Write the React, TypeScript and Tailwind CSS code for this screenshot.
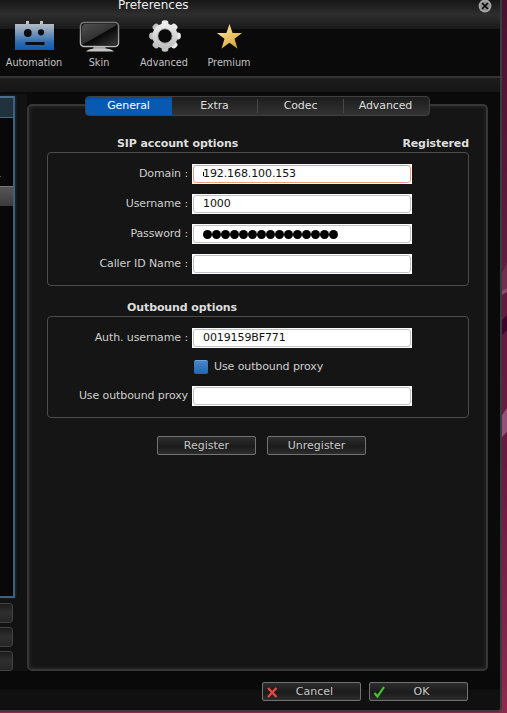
import type { ReactNode } from 'react';

function RobotIcon() {
  return (
    <svg width="42" height="32" viewBox="0 0 42 32">
      <defs>
        <linearGradient id="robot" x1="0" y1="0" x2="0" y2="1">
          <stop offset="0" stopColor="#c4c6c9" />
          <stop offset="0.3" stopColor="#91a5bd" />
          <stop offset="0.75" stopColor="#2b6bb0" />
          <stop offset="1" stopColor="#0a5ab0" />
        </linearGradient>
      </defs>
      <path d="M1 4H12V1H15V4H26V1H29V4H40V30H1Z" fill="url(#robot)" />
      <circle cx="13.800" cy="13" r="3.900" fill="#0b0d10" />
      <circle cx="27" cy="12.300" r="3.100" fill="#0b0d10" />
      <rect x="11.500" y="22" width="19" height="3" fill="#0b0d10" />
    </svg>
  );
}

function MonitorIcon() {
  return (
    <svg width="42" height="32" viewBox="0 0 42 32">
      <defs>
        <linearGradient id="screen" x1="0" y1="0" x2="0.700" y2="1">
          <stop offset="0" stopColor="#505050" />
          <stop offset="1" stopColor="#1c1c1c" />
        </linearGradient>
        <linearGradient id="glow" x1="0" y1="0" x2="1" y2="1">
          <stop offset="0.5" stopColor="#050505" />
          <stop offset="1" stopColor="#383838" />
        </linearGradient>
        <linearGradient id="frame" x1="0" y1="0" x2="0" y2="1">
          <stop offset="0" stopColor="#777" />
          <stop offset="1" stopColor="#bbb" />
        </linearGradient>
      </defs>
      <path d="M15 26H26L27 29.500H14Z" fill="#999" />
      <path d="M7 31.500Q9 29 15 28.500H27Q33 29 35 31.500Z" fill="#c4c4c4" />
      <rect x="1.500" y="2.500" width="38" height="24" rx="3.500" fill="#0b0b0b" stroke="url(#frame)" strokeWidth="1.500" />
      <rect x="3" y="4" width="35" height="21" rx="2" fill="url(#glow)" />
      <path d="M5 4H36L38 5L3 25V6Z" fill="url(#screen)" />
    </svg>
  );
}

function GearIcon() {
  return (
    <svg width="34" height="34" viewBox="-17 -17 34 34">
      <defs>
        <linearGradient id="gear" x1="0" y1="0" x2="0" y2="1">
          <stop offset="0" stopColor="#eee" />
          <stop offset="1" stopColor="#bdbdbd" />
        </linearGradient>
      </defs>
      <g fill="url(#gear)">
        {[0, 45, 90, 135].map((a) => (
          <rect key={a} x="-3.400" y="-15.800" width="6.800" height="31.600" rx="2.800" transform={`rotate(${a})`} />
        ))}
        <circle r="12.600" />
      </g>
      <circle r="7.200" fill="#0a0a0a" stroke="#b4b4b4" strokeWidth="0.800" />
    </svg>
  );
}

function StarIcon() {
  return (
    <svg width="28" height="27" viewBox="0 0 28 27">
      <defs>
        <linearGradient id="star" x1="0" y1="0" x2="0.700" y2="1">
          <stop offset="0" stopColor="#fff0c0" />
          <stop offset="0.5" stopColor="#ecca70" />
          <stop offset="1" stopColor="#d9a63e" />
        </linearGradient>
      </defs>
      <path
        d="M13.500 1L16.600 9.900L26.100 10.100L18.500 15.800L21.400 25.500L13.500 19.800L5.600 25.500L8.500 15.800L0.900 10.100L10.400 9.900Z"
        fill="url(#star)"
      />
    </svg>
  );
}

function CloseIcon() {
  return (
    <svg width="14" height="14" viewBox="0 0 14 14">
      <circle cx="7" cy="7" r="6.400" fill="#a6a6a6" />
      <circle cx="7" cy="7" r="4.600" fill="#8a8a8a" />
      <path d="M4 4L10 10M10 4L4 10" stroke="#080808" strokeWidth="1.700" />
    </svg>
  );
}

function ToolItem({ label, children }: { label: string; children: ReactNode }) {
  return (
    <div className="flex w-[65px] shrink-0 flex-col items-center">
      <div className="flex h-[36px] shrink-0 items-center justify-center pl-px">{children}</div>
      <span className="mt-[2px] text-[9.700px] leading-[14px] tracking-normal text-[#c2c2c2]">{label}</span>
    </div>
  );
}

type FieldProps = { label: string; value?: string; focused?: boolean; secret?: boolean };

function Field({ label, value = '', focused = false, secret = false }: FieldProps) {
  return (
    <div className="flex h-5 items-center">
      <span className="w-[140px] whitespace-nowrap text-right">{label}</span>
      <div className="ml-1 h-5 w-[220px] bg-white p-px">
        <div
          className={`relative flex h-[18px] items-center rounded-[3px] border pl-[9px] text-[#111] ${
            focused ? 'border-[#f39b84]' : 'border-[#bfc1c9]'
          }`}
        >
          {focused && <span className="absolute left-[9px] top-[6px] h-[4px] w-px bg-black" />}
          {secret ? (
            <div className="flex gap-[0.5px] pt-px">
              {Array.from({ length: 15 }, (_, i) => (
                <span key={i} className="size-[8.5px] rounded-full bg-black" />
              ))}
            </div>
          ) : (
            <span>{value}</span>
          )}
        </div>
      </div>
    </div>
  );
}

function Button({ label, icon }: { label: string; icon?: ReactNode }) {
  return (
    <div className="relative flex h-[19px] w-[99px] items-center justify-center rounded-[2px] border border-[#727272] bg-linear-to-b from-[#2d2d2d] via-[#1b1b1b] via-55% to-[#2d2d2d] tracking-normal text-[#c8c8c8]">
      {icon && <span className="absolute left-[3px] top-[2px]">{icon}</span>}
      <span className={icon ? 'pl-[6px]' : ''}>{label}</span>
    </div>
  );
}

const tabs = ['General', 'Extra', 'Codec', 'Advanced'];

function Tabs() {
  return (
    <div className="relative z-10 ml-[58px] flex h-5 w-[345px] overflow-hidden rounded-[4px] border border-[#414141] bg-linear-to-b from-[#1d1d1d] to-[#333]">
      {tabs.map((tab, i) => (
        <div
          key={tab}
          className={`relative flex w-[86px] shrink-0 items-center justify-center ${
            i === 0
              ? 'bg-linear-to-b from-[#064b97] via-[#0759b1] via-20% to-[#0759b1] pr-px text-white'
              : i === 3
                ? 'pr-[3px] text-[#ddd]'
                : 'pr-px text-[#ddd]'
          }`}
        >
          <span className="flex-1 pb-px text-center">{tab}</span>
          {(i === 1 || i === 2) && <span className="-mr-px h-[14px] w-px bg-[#484848]" />}
        </div>
      ))}
    </div>
  );
}

function Sidebar() {
  return (
    <aside className="w-[27px] shrink-0 bg-[#121212] pt-[2px]">
      <div className="h-[502px] w-[15px] border-y-2 border-r-2 border-[#3c607e] border-t-[#496f8d] bg-[#080808] shadow-[1px_0_2px_#1d2c3a]">
        <div className="h-[20px] border-b border-[#45697d] bg-[#20333c]" />
        <div className="flex h-[68px] items-end pb-[9px]">
          <span className="h-px w-px bg-[#914a20]" />
        </div>
        <div className="h-[20px] border-t border-[#777] bg-linear-to-b from-[#555] to-[#3b3b3b]" />
      </div>
      <div className="mt-[5px] flex flex-col gap-1">
        {[0, 1, 2].map((n) => (
          <div
            key={n}
            className="h-5 w-[13px] rounded-r-[4px] border-y border-r border-[#424242] bg-linear-to-b from-[#1c1c1c] via-[#303030] to-[#242424]"
          />
        ))}
      </div>
    </aside>
  );
}

function Wallpaper() {
  return (
    <svg className="block h-[713px] w-[5px]" viewBox="0 0 5 713" preserveAspectRatio="none">
      <defs>
        <linearGradient id="wall" x1="0" y1="0" x2="0" y2="1">
          <stop offset="0" stopColor="#45142f" />
          <stop offset="0.35" stopColor="#601b40" />
          <stop offset="0.65" stopColor="#671b43" />
          <stop offset="1" stopColor="#90294f" />
        </linearGradient>
      </defs>
      <rect width="5" height="713" fill="url(#wall)" />
      <path d="M0 273L5 263V288L0 293Z" fill="#71304f" />
      <path d="M0 291L5 288V292L0 295Z" fill="#8d4b70" />
      <path d="M0 320L5 315V330L0 335Z" fill="#3c052f" />
      <path d="M0 415L5 408V432L0 437Z" fill="#935078" />
    </svg>
  );
}

export default function App() {
  return (
    <div className="flex h-[713px] w-[507px] overflow-hidden bg-[#8a284e] font-['DejaVu_Sans',sans-serif] text-[11px] leading-[14px] tracking-[-0.1px] text-[#cfcfcf]">
      <div className="flex h-[712px] w-[502px] shrink-0 flex-col overflow-hidden rounded-br-[5px] border-b-2 border-r-2 border-[#3b3b3b] bg-[#0a0a0a]">
        <header className="flex h-[29px] shrink-0 items-start justify-between bg-linear-to-b from-[#171717] via-[#2e2e2e] via-50% to-[#191919] pl-[118px] pr-[8px]">
          <span className="text-[12px] leading-[10px] tracking-normal text-[#ededed]">Preferences</span>
          <span className="-mt-px">
            <CloseIcon />
          </span>
        </header>
        <nav className="-mt-[11px] flex h-[58px] shrink-0 pl-[1.5px]">
          <ToolItem label="Automation"><RobotIcon /></ToolItem>
          <ToolItem label="Skin"><MonitorIcon /></ToolItem>
          <ToolItem label="Advanced"><GearIcon /></ToolItem>
          <ToolItem label="Premium"><StarIcon /></ToolItem>
        </nav>
        <div className="h-[16px] shrink-0 border-t-2 border-[#353535] bg-linear-to-b from-[#1d1d1d] to-[#161616]" />
        <div className="mt-[2px] flex h-[577px] shrink-0">
          <Sidebar />
          <main className="w-[461px] pt-[2px]">
            <Tabs />
            <section className="-mt-[12px] h-[567px] rounded-[5px] border-2 border-[#363636] bg-[#151515] pl-[18px] pr-[17px] pt-[28px] shadow-[inset_0_0_4px_#303030]">
              <div className="flex h-[18px] items-center justify-between pl-[70px] pt-[2px] font-bold tracking-[-0.1px] text-[#dedede]">
                <span>SIP account options</span>
                <span>Registered</span>
              </div>
              <div className="flex h-[134px] w-[422px] flex-col gap-[10px] rounded-[4px] border border-[#4b4b4b] pt-[11px]">
                <Field label="Domain :" value="192.168.100.153" focused />
                <Field label="Username :" value="1000" />
                <Field label="Password :" secret />
                <Field label="Caller ID Name :" />
              </div>
              <div className="mt-[12px] flex h-[18px] items-center pl-[80px] pt-[2px] font-bold text-[#dedede]">
                Outbound options
              </div>
              <div className="flex h-[102px] w-[422px] flex-col rounded-[4px] border border-[#4b4b4b] pt-[11px]">
                <Field label="Auth. username :" value="0019159BF771" />
                <div className="mt-[11px] flex h-[16px] items-center pl-[146px]">
                  <span className="h-[14px] w-[14px] rounded-[2px] border-t border-[#71a3dd] bg-linear-to-b from-[#4585cb] to-[#2865aa]" />
                  <span className="ml-[6px]">Use outbound proxy</span>
                </div>
                <div className="mt-[11px]">
                  <Field label="Use outbound proxy" />
                </div>
              </div>
              <div className="mt-[18px] flex gap-[11px] pl-[110px]">
                <Button label="Register" />
                <Button label="Unregister" />
              </div>
            </section>
          </main>
        </div>
        <footer className="flex flex-1 items-start justify-end gap-2 bg-linear-to-b from-[#090909] from-45% to-[#101010] to-50% pr-[32px] pt-[11px]">
          <Button
            label="Cancel"
            icon={
              <svg width="14" height="14" viewBox="0 0 14 14">
                <path d="M2 3L10.500 12M10.500 3L2 12" stroke="#e84545" strokeWidth="2.400" />
              </svg>
            }
          />
          <Button
            label="OK"
            icon={
              <svg width="14" height="14" viewBox="0 0 14 14">
                <path d="M1.500 8L4.500 11.500L11 2" fill="none" stroke="#46c62e" strokeWidth="2.200" />
              </svg>
            }
          />
        </footer>
      </div>
      <Wallpaper />
    </div>
  );
}
